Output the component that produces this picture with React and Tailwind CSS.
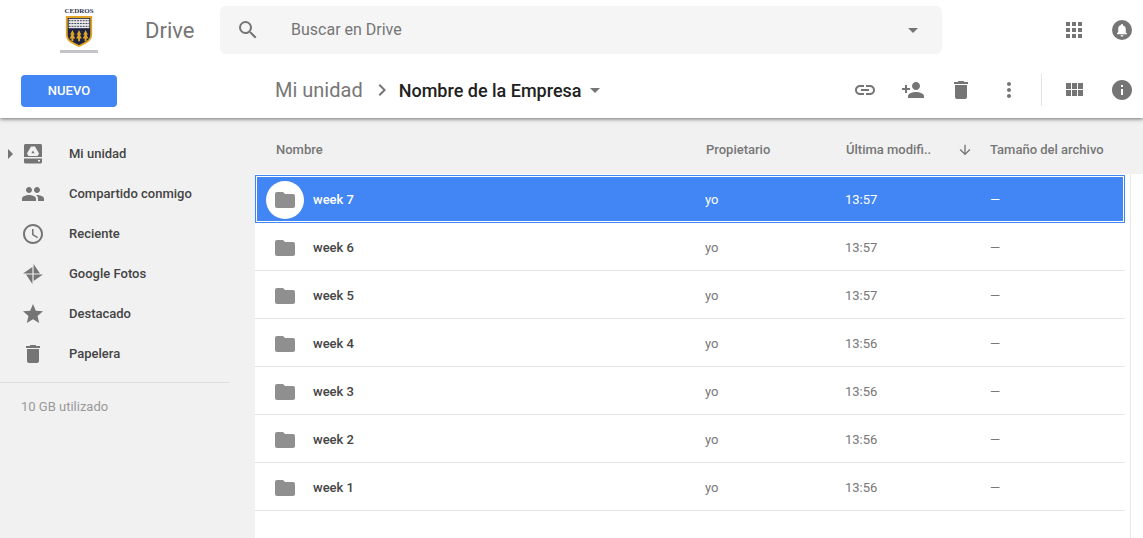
import React from 'react';

const Icon = ({ d, size = 24, className = 'text-[#757575]', children }) => (
  <svg width={size} height={size} viewBox="0 0 24 24" fill="currentColor" className={`shrink-0 ${className}`}>
    {d && <path d={d} />}
    {children}
  </svg>
);

const paths = {
  search: 'M15.5 14h-.79l-.28-.27A6.47 6.47 0 0 0 16 9.5 6.5 6.5 0 1 0 9.5 16c1.61 0 3.09-.59 4.23-1.57l.27.28v.79l5 4.99L20.49 19l-4.99-5zm-6 0C7.01 14 5 11.99 5 9.5S7.01 5 9.5 5 14 7.01 14 9.5 11.99 14 9.5 14z',
  apps: 'M4 8h4V4H4v4zm6 12h4v-4h-4v4zm-6 0h4v-4H4v4zm0-6h4v-4H4v4zm6 0h4v-4h-4v4zm6-10v4h4V4h-4zm-6 4h4V4h-4v4zm6 6h4v-4h-4v4zm0 6h4v-4h-4v4z',
  bell: 'M12 2a10 10 0 1 0 0 20 10 10 0 0 0 0-20zm0 16.5c-.8 0-1.5-.6-1.5-1.3h3c0 .7-.7 1.3-1.5 1.3zm5-2.2H7v-1.1l1.2-1.1v-3.2c0-1.9 1-3.4 2.8-3.8V7c0-.5.4-1 1-1s1 .5 1 1v.5c1.8.4 2.8 1.9 2.8 3.8v3.2l1.2 1.1v1.1z',
  link: 'M3.9 12c0-1.71 1.39-3.1 3.1-3.1h4V7H7c-2.76 0-5 2.24-5 5s2.24 5 5 5h4v-1.9H7c-1.71 0-3.1-1.39-3.1-3.1zM8 13h8v-2H8v2zm9-6h-4v1.9h4c1.71 0 3.1 1.39 3.1 3.1s-1.39 3.1-3.1 3.1h-4V17h4c2.76 0 5-2.24 5-5s-2.24-5-5-5z',
  personAdd: 'M15 12c2.21 0 4-1.79 4-4s-1.79-4-4-4-4 1.79-4 4 1.79 4 4 4zm-9-2V7H4v3H1v2h3v3h2v-3h3v-2H6zm9 4c-2.67 0-8 1.34-8 4v2h16v-2c0-2.66-5.33-4-8-4z',
  trash: 'M6 19c0 1.1.9 2 2 2h8c1.1 0 2-.9 2-2V7H6v12zM19 4h-3.5l-1-1h-5l-1 1H5v2h14V4z',
  more: 'M12 8c1.1 0 2-.9 2-2s-.9-2-2-2-2 .9-2 2 .9 2 2 2zm0 2c-1.1 0-2 .9-2 2s.9 2 2 2 2-.9 2-2-.9-2-2-2zm0 6c-1.1 0-2 .9-2 2s.9 2 2 2 2-.9 2-2-.9-2-2-2z',
  grid: 'M4 11h5V5H4v6zm0 7h5v-6H4v6zm6 0h5v-6h-5v6zm6 0h5v-6h-5v6zm-6-7h5V5h-5v6zm6-6v6h5V5h-5z',
  info: 'M12 2C6.48 2 2 6.48 2 12s4.48 10 10 10 10-4.48 10-10S17.52 2 12 2zm1 15h-2v-6h2v6zm0-8h-2V7h2v2z',
  people: 'M16 11c1.66 0 2.99-1.34 2.99-3S17.66 5 16 5c-1.66 0-3 1.34-3 3s1.34 3 3 3zm-8 0c1.66 0 2.99-1.34 2.99-3S9.66 5 8 5C6.34 5 5 6.34 5 8s1.34 3 3 3zm0 2c-2.33 0-7 1.17-7 3.5V19h14v-2.5c0-2.33-4.67-3.5-7-3.5zm8 0c-.29 0-.62.02-.97.05 1.16.84 1.97 1.97 1.97 3.45V19h6v-2.5c0-2.33-4.67-3.5-7-3.5z',
  clock: 'M11.99 2C6.47 2 2 6.48 2 12s4.47 10 9.99 10C17.52 22 22 17.52 22 12S17.52 2 11.99 2zM12 20c-4.42 0-8-3.58-8-8s3.58-8 8-8 8 3.58 8 8-3.58 8-8 8zm.5-13H11v6l5.25 3.15.75-1.23-4.5-2.67z',
  star: 'M12 17.27 18.18 21l-1.64-7.03L22 9.24l-7.19-.61L12 2 9.19 8.63 2 9.24l5.46 4.73L5.82 21z',
  folder: 'M10 4H4c-1.1 0-2 .9-2 2v12c0 1.1.9 2 2 2h16c1.1 0 2-.9 2-2V8c0-1.1-.9-2-2-2h-8l-2-2z',
  arrowDown: 'M20 12l-1.41-1.41L13 16.17V4h-2v12.17l-5.58-5.59L4 12l8 8 8-8z',
  chevron: 'M10 6 8.59 7.41 13.17 12l-4.58 4.59L10 18l6-6z',
  pinwheel: 'M12.600 2 19 11.400H12.600zM22 12.600 12.600 19V12.600zM11.400 22 5 12.600H11.400zM2 11.400 11.400 5V11.400z',
};

const Logo = () => (
  <div className="flex flex-col items-center w-[40px] font-['Liberation_Serif',serif]">
    <div className="text-[7px] leading-[7px] font-bold text-[#2f3650]">CEDROS</div>
    <svg width="28" height="31" viewBox="0 0 28 33" className="mt-[1px]">
      <path d="M0 0h28v20c0 7-7 10-14 13C7 30 0 27 0 20z" fill="#e0a526" />
      <path d="M2 2h24v18c0 6-6 8-12 11C8 28 2 26 2 20z" fill="#1d2340" />
      <rect x="3" y="3" width="22" height="10" fill="#e7e7e7" />
      <path d="M3 5h22M3 8h22M3 11h22" stroke="#3a3f55" strokeWidth="1" strokeDasharray="2 1" />
      <path d="M7 15l2.500 5H8l2 4H8v3H6v-3H4l2-4H4.500z" fill="#e0a526" />
      <path d="M14 15l2.500 5H15l2 4h-2v3h-2v-3h-2l2-4h-1.500z" fill="#e0a526" />
      <path d="M21 15l2.500 5H22l2 4h-2v3h-2v-3h-2l2-4h-1.500z" fill="#e0a526" />
    </svg>
    <div className="mt-[3px] w-[38px] h-[3px] bg-[#c4c4c8]" />
  </div>
);

const DriveIcon = () => (
  <svg width="24" height="24" viewBox="0 0 24 24" className="shrink-0 text-[#757575]">
    <path
      fill="currentColor"
      fillRule="evenodd"
      d="M4.500 2h15c.8 0 1.500.700 1.500 1.500V15H3V3.500C3 2.700 3.700 2 4.500 2zM3 16.500h18V20c0 .8-.7 1.500-1.500 1.500h-15C3.700 21.500 3 20.800 3 20v-3.500zM17 18v1.500h2V18h-2zM10 4.500l-4 7 1.500 2.500h9l1.500-2.500-4-7h-4zm2 4 1.600 2.800h-3.200z"
    />
  </svg>
);

const navItems = [
  { label: 'Mi unidad', icon: <DriveIcon />, arrow: true },
  { label: 'Compartido conmigo', icon: <Icon d={paths.people} /> },
  { label: 'Reciente', icon: <Icon d={paths.clock} /> },
  { label: 'Google Fotos', icon: <Icon d={paths.pinwheel} /> },
  { label: 'Destacado', icon: <Icon d={paths.star} /> },
  { label: 'Papelera', icon: <Icon d={paths.trash} /> },
];

const folders = [
  { name: 'week 7', time: '13:57', selected: true },
  { name: 'week 6', time: '13:57' },
  { name: 'week 5', time: '13:57' },
  { name: 'week 4', time: '13:56' },
  { name: 'week 3', time: '13:56' },
  { name: 'week 2', time: '13:56' },
  { name: 'week 1', time: '13:56' },
];

const ToolButton = ({ d }) => (
  <div className="flex justify-center w-[48px]">
    <Icon d={d} />
  </div>
);

const FolderRow = ({ name, time, selected }) => (
  <div
    className={
      selected
        ? 'flex items-center h-[48px] pt-[1px] bg-[#4285f4] text-white border border-[#4285f4] outline outline-1 -outline-offset-2 outline-white'
        : 'flex items-center h-[48px] pt-[2px] border-b border-[#e4e4e4] text-[#777]'
    }
  >
    <div className={`flex justify-center ${selected ? 'w-[57px]' : 'w-[58px]'}`}>
      {selected ? (
        <div className="w-[38px] h-[38px] rounded-full bg-white flex items-center justify-center">
          <Icon d={paths.folder} className="text-[#8f8f8f]" />
        </div>
      ) : (
        <div className="ml-[2px] flex"><Icon d={paths.folder} className="text-[#8f8f8f]" /></div>
      )}
    </div>
    <div className={`w-[392px] text-[13px] font-medium ${selected ? 'text-white' : 'text-[#444]'}`}>{name}</div>
    <div className="w-[140px] text-[13px]">yo</div>
    <div className="w-[145px] text-[13px]">{time}</div>
    <div className="text-[13px]">—</div>
  </div>
);

export default function App() {
  return (
    <div className="h-[538px] w-full overflow-hidden bg-[#f1f1f1] flex flex-col font-['Roboto',sans-serif]">
      <header className="relative z-10 bg-white h-[118px] shadow-[0_1px_4px_rgba(0,0,0,0.55)] shrink-0">
        <div className="flex items-center h-[60px]">
          <div className="w-[220px] flex items-center pl-[59px]">
            <Logo />
            <span className="ml-[46px] text-[22px] text-[#757575]">Drive</span>
          </div>
          <div className="w-[722px] h-[48px] bg-[#f5f5f5] rounded-md flex items-center pl-[16px] pr-[17px]">
            <Icon d={paths.search} />
            <span className="ml-[31px] flex-1 text-[16px] text-[#757575]">Buscar en Drive</span>
            <Icon size={24} d="M7 10l5 5 5-5z" />
          </div>
          <div className="flex-1 flex justify-end -mr-[3px]">
            <ToolButton d={paths.apps} />
            <ToolButton d={paths.bell} />
          </div>
        </div>
        <div className="flex items-center h-[58px] pt-[2px]">
          <div className="w-[275px] pl-[21px] pt-[2px]">
            <button className="w-[96px] h-[32px] rounded-sm bg-[#4285f4] text-white text-[13px] font-medium">NUEVO</button>
          </div>
          <span className="text-[20px] text-[#777]">Mi unidad</span>
          <Icon d={paths.chevron} className="text-[#757575] ml-[7px]" />
          <span className="ml-[5px] text-[18px] font-medium text-[#212121]">Nombre de la Empresa</span>
          <Icon d="M7 10l5 5 5-5z" className="text-[#757575] ml-[1px]" />
          <div className="flex-1 flex items-center justify-end -mr-[3px]">
            <ToolButton d={paths.link} />
            <ToolButton d={paths.personAdd} />
            <ToolButton d={paths.trash} />
            <ToolButton d={paths.more} />
            <div className="w-px h-[32px] bg-[#e4e4e4] mx-[8px]" />
            <ToolButton d={paths.grid} />
            <ToolButton d={paths.info} />
          </div>
        </div>
      </header>

      <div className="flex flex-1 min-h-0">
        <aside className="w-[255px] shrink-0 pt-[16px]">
          {navItems.map((item) => (
            <div key={item.label} className="relative flex items-center h-[40px] pl-[21px]">
              {item.arrow && (
                <div className="absolute left-[8px] w-0 h-0 border-y-[5px] border-y-transparent border-l-[5px] border-l-[#757575]" />
              )}
              {item.icon}
              <span className="ml-[24px] text-[13px] font-medium text-[#444]">{item.label}</span>
            </div>
          ))}
          <div className="mt-[8px] w-[229px] border-t border-[#dcdcdc]" />
          <div className="mt-[14px] pl-[21px] text-[13px] text-[#999]">10 GB utilizado</div>
        </aside>

        <main className="flex-1 min-w-0 flex flex-col">
          <div className="flex items-center h-[56px] pt-[7px] shrink-0 text-[13px] font-medium text-[#777]">
            <span className="ml-[21px] w-[430px]">Nombre</span>
            <span className="w-[140px]">Propietario</span>
            <span className="w-[110px]">Última modifi..</span>
            <Icon d={paths.arrowDown} size={16} className="text-[#757575] ml-[1px]" />
            <span className="ml-[17px]">Tamaño del archivo</span>
          </div>
          <div className="flex-1 flex bg-white pt-[1px]">
            <div className="w-[870px]">
              {folders.map((folder) => (
                <FolderRow key={folder.name} {...folder} />
              ))}
            </div>
            <div className="ml-[5px] -mt-[1px] flex-1 border-l border-[#e8e8e8]" />
          </div>
        </main>
      </div>
    </div>
  );
}
